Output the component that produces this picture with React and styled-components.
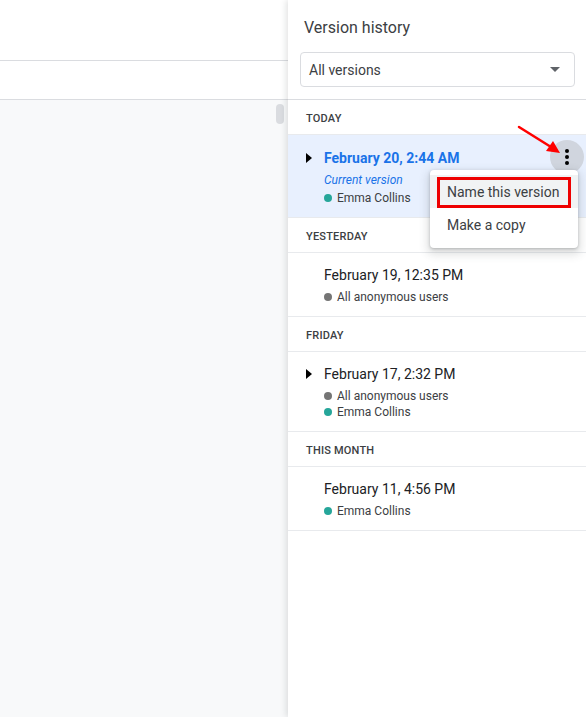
import React from 'react'
import styled, { createGlobalStyle } from 'styled-components'

const GlobalStyle = createGlobalStyle`
  html, body {
    margin: 0;
    padding: 0;
    background: #fff;
  }
  body {
    font-family: Roboto, "Liberation Sans", Arial, sans-serif;
    color: #202124;
  }
`

const Page = styled.div`
  display: flex;
  width: 586px;
  height: 717px;
  overflow: hidden;
`

const Editor = styled.div`
  flex: 1;
  display: flex;
  flex-direction: column;
  min-width: 0;
`

const TopBar = styled.div`
  height: ${p => p.h}px;
  background: #fff;
  border-bottom: 1px solid #dadce0;
  flex-shrink: 0;
`

const Canvas = styled.div`
  flex: 1;
  background: #f8f9fa;
  display: flex;
  justify-content: flex-end;
  padding: 4px 4px 0 0;
`

const ScrollThumb = styled.div`
  width: 8px;
  height: 20px;
  border-radius: 4px;
  background: #dadce0;
`

const Panel = styled.aside`
  position: relative;
  width: 298px;
  flex-shrink: 0;
  background: #fff;
  box-shadow: -2px 0 6px rgba(60, 64, 67, 0.15);
  display: flex;
  flex-direction: column;
`

const PanelHead = styled.div`
  padding: 18px 11px 12px 12px;
  border-bottom: 1px solid #dadce0;
`

const Title = styled.h2`
  margin: 0 0 14px 4px;
  font-size: 16px;
  line-height: 20px;
  font-weight: 400;
  color: #3c4043;
`

const Select = styled.div`
  height: 33px;
  border: 1px solid #dadce0;
  border-radius: 4px;
  display: flex;
  align-items: center;
  justify-content: space-between;
  padding: 0 14px 0 8px;
  font-size: 14px;
  color: #3c4043;
`

const Caret = styled.span`
  width: 0;
  height: 0;
  border-left: 5px solid transparent;
  border-right: 5px solid transparent;
  border-top: 5px solid #5f6368;
`

const SectionLabel = styled.div`
  height: 35px;
  box-sizing: border-box;
  display: flex;
  align-items: center;
  padding: 2px 0 0 18px;
  font-size: 11px;
  font-weight: 500;
  letter-spacing: 0.2px;
  color: #3c4043;
  border-bottom: 1px solid #e8eaed;
`

const Row = styled.div`
  position: relative;
  display: flex;
  padding: ${p => (p.selected ? '13px 0 11px' : '12px 0 11px')};
  background: ${p => (p.selected ? '#e8f0fe' : '#fff')};
  border-bottom: 1px solid #e8eaed;
`

const ExpandCol = styled.div`
  width: 36px;
  flex-shrink: 0;
  display: flex;
  justify-content: flex-end;
  padding: 5px 12px 0 0;
  box-sizing: border-box;
`

const Triangle = styled.span`
  width: 0;
  height: 0;
  border-top: 5px solid transparent;
  border-bottom: 5px solid transparent;
  border-left: 6px solid #000;
`

const Info = styled.div`
  display: flex;
  flex-direction: column;
`

const Stamp = styled.div`
  font-size: 14px;
  line-height: 20px;
  margin-bottom: ${p => (p.selected ? 3 : 4)}px;
  color: ${p => (p.selected ? '#1a73e8' : '#202124')};
  font-weight: ${p => (p.selected ? 700 : 400)};
`

const Current = styled.div`
  font-size: 12px;
  line-height: 18px;
  font-style: italic;
  color: #1a73e8;
  margin-bottom: 1px;
`

const Author = styled.div`
  display: flex;
  align-items: center;
  gap: 5px;
  font-size: 12px;
  line-height: 16px;
  color: #3c4043;
`

const Dot = styled.span`
  width: 8px;
  height: 8px;
  border-radius: 50%;
  background: ${p => p.color};
`

const MoreButton = styled.button`
  position: absolute;
  top: 5px;
  right: 2px;
  width: 34px;
  height: 34px;
  border: 0;
  border-radius: 50%;
  background: #d0d5de;
  display: flex;
  align-items: center;
  justify-content: center;
  padding: 0;
`

const Menu = styled.div`
  position: absolute;
  top: 170px;
  left: 142px;
  width: 148px;
  padding: 5px 0 7px;
  background: #fff;
  border-radius: 4px;
  box-shadow: 0 1px 3px rgba(60, 64, 67, 0.3), 0 4px 8px 3px rgba(60, 64, 67, 0.15);
  z-index: 2;
`

const MenuItem = styled.div`
  position: relative;
  height: 33px;
  display: flex;
  align-items: center;
  padding-left: 17px;
  font-size: 14px;
  color: #3c4043;
  background: ${p => (p.active ? '#f1f3f4' : 'transparent')};

  ${p =>
    p.marked &&
    `
    &::after {
      content: '';
      position: absolute;
      left: 7px;
      right: 7px;
      top: 2px;
      bottom: 0;
      border: 3px solid #e00;
    }
  `}
`

const Annotation = styled.svg`
  position: absolute;
  top: 120px;
  left: 225px;
  z-index: 3;
  pointer-events: none;
`

const people = {
  emma: { name: 'Emma Collins', color: '#26a69a' },
  anon: { name: 'All anonymous users', color: '#757575' },
}

const sections = [
  {
    label: 'TODAY',
    items: [{ stamp: 'February 20, 2:44 AM', expandable: true, selected: true, who: ['emma'] }],
  },
  {
    label: 'YESTERDAY',
    items: [{ stamp: 'February 19, 12:35 PM', who: ['anon'] }],
  },
  {
    label: 'FRIDAY',
    items: [{ stamp: 'February 17, 2:32 PM', expandable: true, who: ['anon', 'emma'] }],
  },
  {
    label: 'THIS MONTH',
    items: [{ stamp: 'February 11, 4:56 PM', who: ['emma'] }],
  },
]

const VersionRow = ({ item }) => (
  <Row selected={item.selected}>
    <ExpandCol>{item.expandable && <Triangle />}</ExpandCol>
    <Info>
      <Stamp selected={item.selected}>{item.stamp}</Stamp>
      {item.selected && <Current>Current version</Current>}
      {item.who.map(k => (
        <Author key={k}>
          <Dot color={people[k].color} />
          {people[k].name}
        </Author>
      ))}
    </Info>
    {item.selected && (
      <MoreButton aria-label="More actions">
        <svg width="4" height="16" viewBox="0 0 4 16">
          <circle cx="2" cy="2" r="2" fill="#000" />
          <circle cx="2" cy="8" r="2" fill="#000" />
          <circle cx="2" cy="14" r="2" fill="#000" />
        </svg>
      </MoreButton>
    )}
  </Row>
)

export default function App() {
  return (
    <>
      <GlobalStyle />
      <Page>
        <Editor>
          <TopBar h={60} />
          <TopBar h={38} />
          <Canvas>
            <ScrollThumb />
          </Canvas>
        </Editor>
        <Panel>
          <PanelHead>
            <Title>Version history</Title>
            <Select>
              All versions
              <Caret />
            </Select>
          </PanelHead>
          {sections.map(s => (
            <React.Fragment key={s.label}>
              <SectionLabel>{s.label}</SectionLabel>
              {s.items.map(it => (
                <VersionRow key={it.stamp} item={it} />
              ))}
            </React.Fragment>
          ))}
          <Menu>
            <MenuItem active marked>Name this version</MenuItem>
            <MenuItem>Make a copy</MenuItem>
          </Menu>
          <Annotation width="50" height="40" viewBox="0 0 50 40">
            <line x1="6" y1="7" x2="38" y2="27" stroke="#f00" strokeWidth="2.5" strokeLinecap="round" />
            <polygon points="47,33 33,31 40,21" fill="#f00" />
          </Annotation>
        </Panel>
      </Page>
    </>
  )
}
